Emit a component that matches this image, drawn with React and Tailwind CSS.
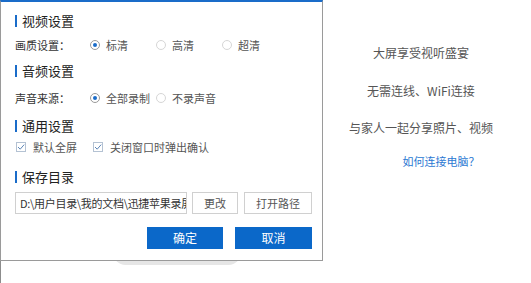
import React from 'react';

const font = { fontFamily: '"Noto Sans CJK SC", "Microsoft YaHei", sans-serif' };

function SectionTitle({ children, className = '' }) {
  return (
    <div className={`flex items-center h-[20px] ${className}`}>
      <span className="w-[2px] h-[12px] bg-[#1a6cc9] ml-[14px]" />
      <span className="ml-[5px] text-[13px] leading-[20px] text-[#222]">{children}</span>
    </div>
  );
}

function Radio({ checked, label }) {
  return (
    <span className="flex items-center w-[66px] shrink-0">
      <span
        className={`w-[10px] h-[10px] rounded-full border flex items-center justify-center bg-white ${
          checked ? 'border-[#9a9a9a]' : 'border-[#d6d6d6]'
        }`}
      >
        {checked && <span className="w-[4px] h-[4px] rounded-full bg-[#1a6cc9]" />}
      </span>
      <span className="ml-[6px] text-[11px] text-[#555]">{label}</span>
    </span>
  );
}

function Check({ label, className = '' }) {
  return (
    <span className={`flex items-center ${className}`}>
      <svg width="10" height="10" viewBox="0 0 10 10">
        <rect x="0.5" y="0.5" width="9" height="9" fill="white" stroke="#b4c2d3" />
        <path d="M2 5 L4.2 7.2 L8.2 2.6" fill="none" stroke="#5d86b8" strokeWidth="1" />
      </svg>
      <span className="ml-[7px] text-[11px] text-[#555]">{label}</span>
    </span>
  );
}

export default function App() {
  return (
    <div className="relative w-[531px] h-[283px] bg-white overflow-hidden" style={font}>
      {/* background page */}
      <div className="flex h-full border-l border-[#8c8c8c]">
        <div className="w-[322px] shrink-0">
          <div className="mt-[240px] ml-[112px] w-[128px] h-[25px] rounded-full bg-[#e6e6e6]" />
        </div>
        <div className="flex-1 flex flex-col text-[12px] text-[#555] leading-[16px] pr-[12px] text-center">
          <div className="mt-[45px]">大屏享受视听盛宴</div>
          <div className="mt-[22px]">无需连线、WiFi连接</div>
          <div className="mt-[21px]">与家人一起分享照片、视频</div>
          <div className="mt-[17px] pl-[40px] text-[11px] text-[#2a78d2]">如何连接电脑？</div>
        </div>
      </div>

      {/* settings dialog */}
      <div className="absolute top-0 left-0 w-[323px] h-[261px] bg-white border-t-2 border-t-[#1a6cc9] border-x border-b border-x-[#9a9a9a] border-b-[#9a9a9a]">
        <SectionTitle className="mt-[9px]">视频设置</SectionTitle>
        <div className="flex items-center h-[20px] mt-[4px] pl-[14px]">
          <span className="w-[75px] text-[11px] text-[#333]">画质设置：</span>
          <Radio checked label="标清" />
          <Radio label="高清" />
          <Radio label="超清" />
        </div>

        <SectionTitle className="mt-[6px]">音频设置</SectionTitle>
        <div className="flex items-center h-[20px] mt-[7px] pl-[14px]">
          <span className="w-[75px] text-[11px] text-[#333]">声音来源：</span>
          <Radio checked label="全部录制" />
          <Radio label="不录声音" />
        </div>

        <SectionTitle className="mt-[8px]">通用设置</SectionTitle>
        <div className="flex items-center h-[20px] mt-[1px] pl-[15px]">
          <Check label="默认全屏" />
          <Check label="关闭窗口时弹出确认" className="ml-[16px]" />
        </div>

        <SectionTitle className="mt-[10px]">保存目录</SectionTitle>
        <div className="flex items-center mt-[5px] pl-[14px] h-[22px]">
          <div className="w-[172px] h-[22px] border border-[#d0d0d0] pl-[4px] text-[11px] leading-[20px] tracking-[-0.3px] text-[#333] whitespace-nowrap overflow-hidden">
            D:\用户目录\我的文档\迅捷苹果录屏
          </div>
          <button className="ml-[5px] w-[46px] h-[22px] border border-[#d0d0d0] bg-white text-[11px] text-[#555]">
            更改
          </button>
          <button className="ml-[6px] w-[68px] h-[22px] border border-[#d0d0d0] bg-white text-[11px] text-[#555]">
            打开路径
          </button>
        </div>

        <div className="flex justify-end gap-[12px] mt-[13px] pr-[10px]">
          <button className="w-[76px] h-[22px] bg-[#0b68c9] text-white text-[12px]">确定</button>
          <button className="w-[77px] h-[22px] bg-[#0b68c9] text-white text-[12px]">取消</button>
        </div>
      </div>
    </div>
  );
}
